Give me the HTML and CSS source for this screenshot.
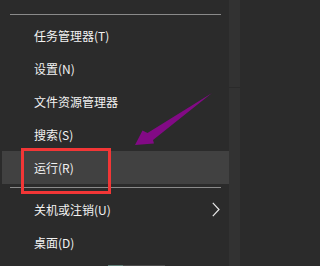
FILE: index.html
```html
<!DOCTYPE html>
<html>
<head>
<meta charset="utf-8">
<link rel="stylesheet" href="styles.css">
</head>
<body>
<div class="screen">
  <div class="menu">
    <div class="sep top"></div>
    <div class="item">任务管理器(T)</div>
    <div class="item">设置(N)</div>
    <div class="item">文件资源管理器</div>
    <div class="item">搜索(S)</div>
    <div class="item active">运行(R)</div>
    <div class="sep"></div>
    <div class="item">关机或注销(U)
      <svg class="chev" width="8" height="15" viewBox="0 0 8 15"><polyline points="0.8,0.8 7,7.5 0.8,14.2" fill="none" stroke="#e8e8e8" stroke-width="1.2"/></svg>
    </div>
    <div class="item">桌面(D)</div>
    <div class="taskbar"><span class="tb1"></span><span class="tb2"></span></div>
  </div>
  <div class="strip"><div class="strip-line"></div></div>
  <div class="redbox"></div>
  <svg class="arrow" width="240" height="266" viewBox="0 0 240 266"><polygon points="135,145 142.5,130.5 147.5,133 212,93 153,140 154,143.5" fill="#820a85"/></svg>
</div>
</body>
</html>
```
FILE: styles.css
```css
html, body {
  margin: 0;
  padding: 0;
  background: #2b2b2b;
}
.screen {
  position: relative;
  width: 240px;
  height: 266px;
  display: flex;
  overflow: hidden;
  font-family: "Noto Sans CJK SC", "Noto Sans", sans-serif;
  font-size: 12px;
  color: #f2f2f2;
}
.menu {
  width: 229px;
  background: #2b2b2b;
  padding-top: 14px;
  box-sizing: border-box;
  display: flex;
  flex-direction: column;
}
.sep {
  height: 1px;
  background: #8a8a8a;
  margin: 3px 8px 5px 10px;
}
.sep.top {
  margin-top: 0;
  margin-bottom: 4px;
}
.item {
  height: 33px;
  margin-left: 2px;
  padding-left: 32px;
  padding-right: 9px;
  display: flex;
  align-items: center;
  justify-content: space-between;
  line-height: 1;
}
.item.active {
  background: #414141;
}
.chev {
  display: block;
}
.taskbar {
  margin-top: auto;
  height: 1px;
  display: flex;
  padding-left: 108px;
}
.tb1 {
  width: 15px;
  background: #5f7d76;
}
.tb2 {
  width: 42px;
  background: #4a4a4a;
}
.strip {
  flex: 1;
  background: #323232;
  position: relative;
}
.strip-line {
  margin-top: 87px;
  height: 1px;
  background: #2a2a2a;
}
.redbox {
  position: absolute;
  left: 21px;
  top: 148px;
  width: 90px;
  height: 46px;
  box-sizing: border-box;
  border: 3px solid #f23636;
}
.arrow {
  position: absolute;
  left: 0;
  top: 0;
}
```
